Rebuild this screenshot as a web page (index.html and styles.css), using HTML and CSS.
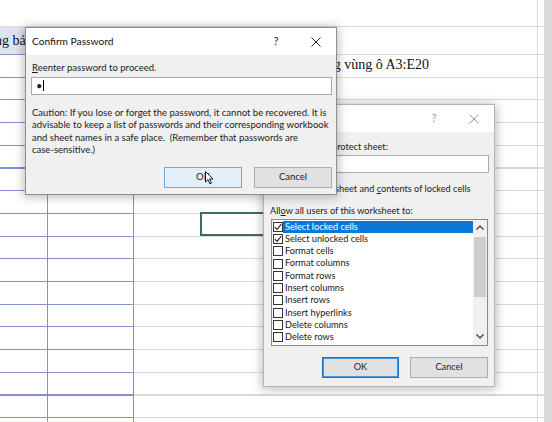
FILE: index.html
```html
<!DOCTYPE html>
<html>
<head>
<meta charset="utf-8">
<link rel="stylesheet" href="styles.css">
</head>
<body>
<div class="screen">
  <div class="sheet">
    <div class="col"></div><div class="col"></div><div class="col"></div>
    <div class="col"></div><div class="col"></div><div class="col"></div>
    <div class="col"></div><div class="col"></div><div class="col"></div>
    <div class="band"></div>
    <div class="box boxa"></div>
    <div class="box boxb"></div>
    <div class="t2">ng bảo vệ trang tính</div>
    <div class="t3">Chỉ cho phép nhập dữ liệu trong vùng ô A3:E20</div>
    <div class="selcell"></div>
  </div>

  <div class="dlg d2">
    <div class="title">
      <span class="name">Protect Sheet</span>
      <span class="tbtn q">?</span>
      <span class="tbtn x"><svg width="10" height="10" viewBox="0 0 10 10"><path d="M0.5 0.5L9.5 9.5M9.5 0.5L0.5 9.5" stroke="currentColor" stroke-width="1" fill="none"/></svg></span>
    </div>
    <div class="body2">
      <div class="lbl l2a"><u>P</u>assword to unprotect sheet:</div>
      <div class="input in2"></div>
      <div class="chkrow"><span class="cb on"><svg width="8" height="8" viewBox="0 0 8 8"><path d="M0.8 4.2L3 6.4L7.3 1.2" stroke="#222" stroke-width="1.1" fill="none"/></svg></span><span>Protect worksheet and <u>c</u>ontents of locked cells</span></div>
      <div class="lbl l2b">All<u>o</u>w all users of this worksheet to:</div>
      <div class="list">
        <div class="items">
          <div class="item hl"><span class="cb on"><svg width="8" height="8" viewBox="0 0 8 8"><path d="M0.8 4.2L3 6.4L7.3 1.2" stroke="#222" stroke-width="1.1" fill="none"/></svg></span><span class="it">Select locked cells</span></div>
          <div class="item"><span class="cb on"><svg width="8" height="8" viewBox="0 0 8 8"><path d="M0.8 4.2L3 6.4L7.3 1.2" stroke="#222" stroke-width="1.1" fill="none"/></svg></span><span class="it">Select unlocked cells</span></div>
          <div class="item"><span class="cb"></span><span class="it">Format cells</span></div>
          <div class="item"><span class="cb"></span><span class="it">Format columns</span></div>
          <div class="item"><span class="cb"></span><span class="it">Format rows</span></div>
          <div class="item"><span class="cb"></span><span class="it">Insert columns</span></div>
          <div class="item"><span class="cb"></span><span class="it">Insert rows</span></div>
          <div class="item"><span class="cb"></span><span class="it">Insert hyperlinks</span></div>
          <div class="item"><span class="cb"></span><span class="it">Delete columns</span></div>
          <div class="item"><span class="cb"></span><span class="it">Delete rows</span></div>
        </div>
        <div class="sbar">
          <span class="arr"><svg width="8" height="5" viewBox="0 0 8 5"><path d="M0.5 4.5L4 1L7.5 4.5" stroke="#333" stroke-width="1.2" fill="none"/></svg></span>
          <span class="track"><span class="thumb"></span></span>
          <span class="arr"><svg width="8" height="5" viewBox="0 0 8 5"><path d="M0.5 0.5L4 4L7.5 0.5" stroke="#333" stroke-width="1.2" fill="none"/></svg></span>
        </div>
      </div>
      <div class="btns b2">
        <div class="btn def">OK</div>
        <div class="btn">Cancel</div>
      </div>
    </div>
  </div>

  <div class="dlg d1">
    <div class="title">
      <span class="name">Confirm Password</span>
      <span class="tbtn q">?</span>
      <span class="tbtn x"><svg width="10" height="10" viewBox="0 0 10 10"><path d="M0.5 0.5L9.5 9.5M9.5 0.5L0.5 9.5" stroke="currentColor" stroke-width="1" fill="none"/></svg></span>
    </div>
    <div class="body1">
      <div class="lbl l1"><u>R</u>eenter password to proceed.</div>
      <div class="input in1"><span class="dot">•</span><span class="caret"></span></div>
      <p class="caution">Caution: If you lose or forget the password, it cannot be recovered. It is advisable to keep a list of passwords and their corresponding workbook and sheet names in a safe place.&nbsp; (Remember that passwords are <span class="nw">case-sensitive.)</span></p>
      <div class="btns b1">
        <div class="btn hover">OK<svg class="cursor" width="9" height="14" viewBox="0 0 9 14"><path d="M0.5 0.5L0.5 11L3 8.6L4.8 12.8L6.4 12.1L4.6 8L8 8Z" fill="#fff" stroke="#000" stroke-width="0.9" stroke-linejoin="round"/></svg></div>
        <div class="btn">Cancel</div>
      </div>
    </div>
  </div>
</div>
</body>
</html>
```

FILE: styles.css
```css
* { box-sizing: border-box; margin: 0; padding: 0; }
html, body { width: 552px; height: 422px; overflow: hidden; background: #fff; }
.screen { position: relative; width: 552px; height: 422px; overflow: hidden; }

.sheet {
  display: grid;
  grid-template-columns: 48px 86px 67px 68px 66px 68px 67px 68px 1fr;
  grid-template-rows: 27px 27px repeat(17, 22.7px);
  height: 100%;
  font-family: "Liberation Serif", "Times New Roman", serif;
  font-size: 14px;
  color: #111;
  background:
    linear-gradient(#dadada, #dadada) 0 26px / 100% 1px no-repeat,
    repeating-linear-gradient(to bottom, #dadada 0 1px, transparent 1px 22.7px) 0 54px / 100% 400px no-repeat;
}
.col { grid-row: 1 / -1; border-right: 1px solid #dadada; }
.band { grid-column: 1 / 3; grid-row: 2; background: #dde3ef; }
.box {
  grid-row: 3 / -1;
  border-right: 1px solid #8591cc;
  background: #fff repeating-linear-gradient(to bottom, #8591cc 0 1px, transparent 1px 22.7px);
}
.boxa { grid-column: 1; }
.boxb { grid-column: 2; }
.t2 { grid-column: 1 / 5; grid-row: 2; align-self: center; white-space: nowrap; margin-left: -5px; }
.t3 { grid-column: 1 / 8; grid-row: 3; align-self: center; white-space: nowrap; text-align: right; padding-right: 41px; overflow: hidden; }
.selcell { grid-column: 4; grid-row: 10; border: 2px solid #3f6d58; margin: -1px 0 0 -1px; }

.dlg {
  position: absolute;
  display: flex;
  flex-direction: column;
  background: #f0f0f0;
  border: 1px solid #8e8e8e;
  box-shadow: 0 1px 10px 1px rgba(0, 0, 0, 0.28);
  font-family: Lato, "Noto Sans", sans-serif;
  font-size: 9.5px;
  line-height: 12.5px;
  color: #1a1a1a;
}
.d1 { left: 25px; top: 27px; width: 312px; height: 168px; }
.d2 { left: 263px; top: 104px; width: 232px; height: 283px; border-color: #b4b4b4; font-size: 9.2px; }

.title { flex: none; height: 27px; background: #fff; display: flex; align-items: center; }
.title .name { flex: 1; padding-left: 6px; font-size: 10.2px; color: #111; }
.tbtn { width: 40px; height: 100%; display: flex; align-items: center; justify-content: center; color: #222; }
.tbtn.q { font-size: 11px; }
.d2 .tbtn { color: #9a9a9a; }

.lbl { white-space: nowrap; }
.nw { white-space: nowrap; }
u { text-decoration-thickness: 1px; text-underline-offset: 1px; }

.input { background: #fff; border: 1px solid #a9a9a9; height: 18px; }

.body1 { display: flex; flex-direction: column; padding: 0 4px 0 5px; }
.l1 { margin: 6.5px 0 0 1px; }
.in1 { margin-top: 2.5px; display: flex; align-items: center; padding-left: 4px; }
.dot { font-size: 11px; line-height: 10px; }
.caret { width: 1px; height: 11px; background: #000; margin-left: 1px; }
.caution { margin: 12px 0 0 1px; width: 302px; }

.btns { display: flex; justify-content: flex-end; }
.b1 { margin-top: 10px; gap: 12px; }
.btn {
  position: relative;
  width: 78px;
  height: 21px;
  background: #e1e1e1;
  border: 1px solid #adadad;
  display: flex;
  align-items: center;
  justify-content: center;
  color: #222;
}
.btn.hover { background: #e3eff9; border-color: #6aa8e6; }
.btn.def { border: 1px solid #0a74d0; box-shadow: inset 0 0 0 1px #4b98e2; }
.cursor { position: absolute; left: 40px; top: 3px; }

.body2 { display: flex; flex-direction: column; padding: 0 5px 0 6px; }
.l2a { margin-top: 8.5px; }
.in2 { margin-top: 1.5px; }
.chkrow { margin-top: 10.5px; display: flex; align-items: center; gap: 3px; white-space: nowrap; }
.l2b { margin-top: 9px; }
.cb {
  flex: none;
  width: 10px;
  height: 10px;
  background: #fff;
  border: 1px solid #333;
  display: flex;
  align-items: center;
  justify-content: center;
}
.list {
  margin: 1.5px 1px 0 1px;
  height: 127px;
  background: #fff;
  border: 1px solid #8a8a8a;
  display: flex;
}
.items { flex: 1; padding: 1px 0 0 1px; }
.item { height: 12.3px; display: flex; align-items: center; white-space: nowrap; }
.it { flex: 1; height: 100%; padding-left: 2px; line-height: 12.3px; }
.item.hl .it { background: #0a78d7; color: #fff; }
.sbar { flex: none; width: 14px; background: #f0f0f0; display: flex; flex-direction: column; }
.arr { flex: none; height: 16px; display: flex; align-items: center; justify-content: center; }
.track { flex: 1; padding: 0 1px; display: flex; flex-direction: column; }
.thumb { height: 60px; margin-top: 1px; background: #cdcdcd; }
.b2 { margin: 11px 0 0 0; gap: 11px; padding-right: 1px; }
.b2 .btn:first-child { width: 77px; }
```
